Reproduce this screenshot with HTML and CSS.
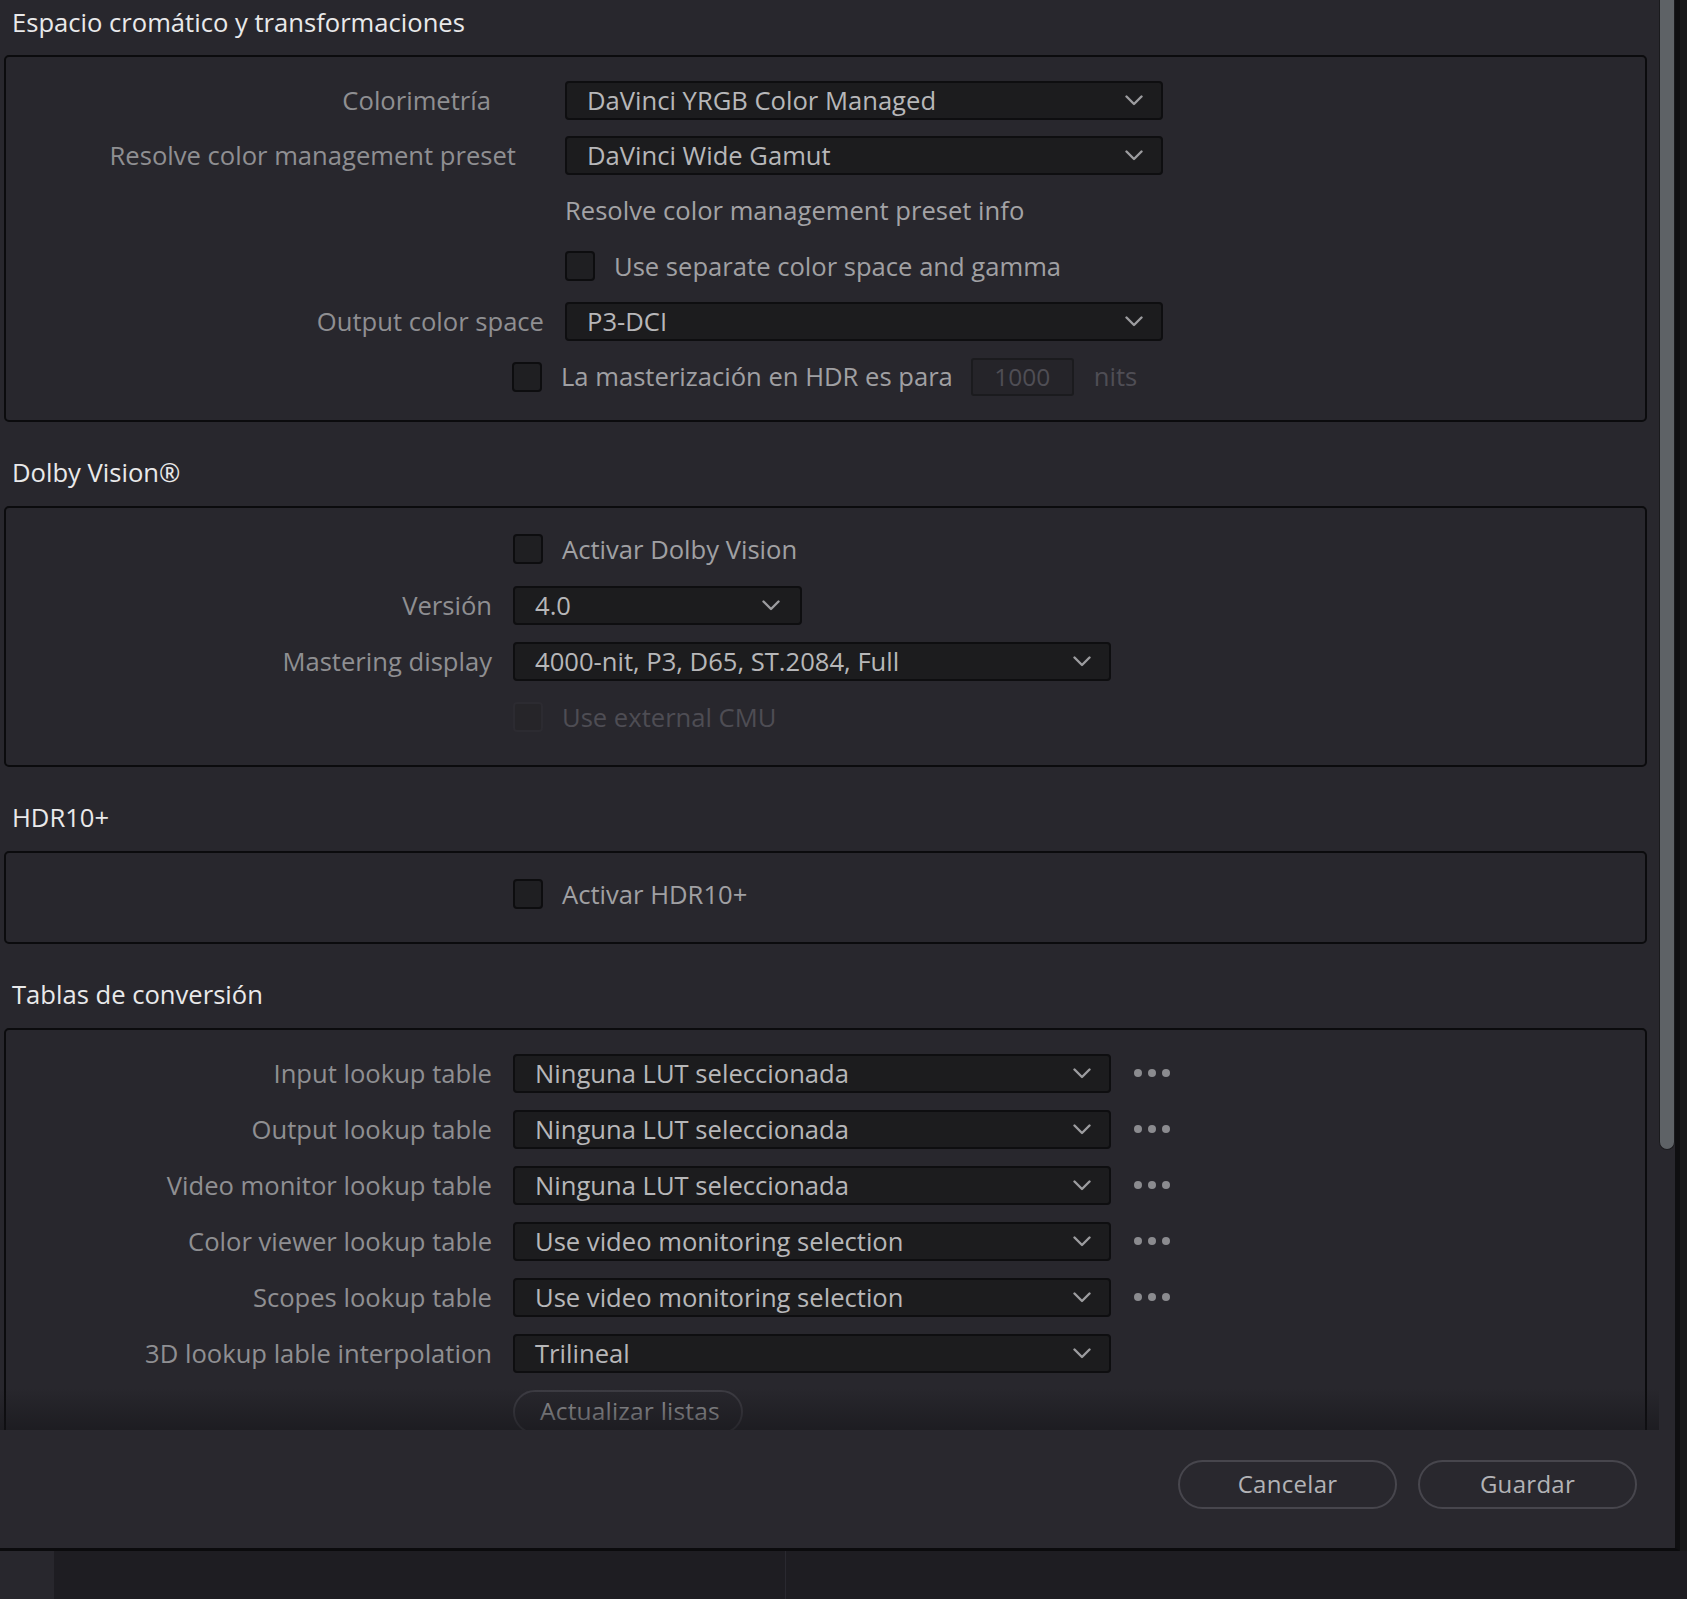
FILE: index.html
```html
<!DOCTYPE html>
<html lang="es">
<head>
<meta charset="utf-8">
<title>Espacio cromático y transformaciones</title>
<link rel="stylesheet" href="styles.css">
</head>
<body>
<div class="top">
  <div class="window">
    <div class="scroll">
      <div class="content">
        <h2 class="sec-title sec-title--first">Espacio cromático y transformaciones</h2>
        <div class="group group--wide">
          <div class="row row--tight">
            <div class="lbl lbl--p74">Colorimetría</div>
            <div class="select"><span>DaVinci YRGB Color Managed</span><svg class="chev" viewBox="0 0 18 11"><polyline points="1.5,1.5 9,9 16.5,1.5"/></svg></div>
          </div>
          <div class="row row--tight">
            <div class="lbl lbl--p49">Resolve color management preset</div>
            <div class="select"><span>DaVinci Wide Gamut</span><svg class="chev" viewBox="0 0 18 11"><polyline points="1.5,1.5 9,9 16.5,1.5"/></svg></div>
          </div>
          <div class="row row--tight">
            <div class="lbl"></div>
            <div class="info">Resolve color management preset info</div>
          </div>
          <div class="row row--tight">
            <div class="lbl"></div>
            <div class="check"><span class="box"></span><span class="check-text">Use separate color space and gamma</span></div>
          </div>
          <div class="row row--tight">
            <div class="lbl">Output color space</div>
            <div class="select"><span>P3-DCI</span><svg class="chev" viewBox="0 0 18 11"><polyline points="1.5,1.5 9,9 16.5,1.5"/></svg></div>
          </div>
          <div class="row row--tight row--hdr">
            <div class="check"><span class="box"></span><span class="check-text">La masterización en HDR es para</span></div>
            <div class="num">1000</div>
            <span class="unit">nits</span>
          </div>
        </div>

        <h2 class="sec-title">Dolby Vision®</h2>
        <div class="group">
          <div class="row">
            <div class="lbl"></div>
            <div class="check"><span class="box"></span><span class="check-text">Activar Dolby Vision</span></div>
          </div>
          <div class="row">
            <div class="lbl">Versión</div>
            <div class="select select--short"><span>4.0</span><svg class="chev" viewBox="0 0 18 11"><polyline points="1.5,1.5 9,9 16.5,1.5"/></svg></div>
          </div>
          <div class="row">
            <div class="lbl">Mastering display</div>
            <div class="select"><span>4000-nit, P3, D65, ST.2084, Full</span><svg class="chev" viewBox="0 0 18 11"><polyline points="1.5,1.5 9,9 16.5,1.5"/></svg></div>
          </div>
          <div class="row">
            <div class="lbl"></div>
            <div class="check check--disabled"><span class="box"></span><span class="check-text">Use external CMU</span></div>
          </div>
        </div>

        <h2 class="sec-title">HDR10+</h2>
        <div class="group">
          <div class="row">
            <div class="lbl"></div>
            <div class="check"><span class="box"></span><span class="check-text">Activar HDR10+</span></div>
          </div>
        </div>

        <h2 class="sec-title">Tablas de conversión</h2>
        <div class="group group--open">
          <div class="row">
            <div class="lbl">Input lookup table</div>
            <div class="select"><span>Ninguna LUT seleccionada</span><svg class="chev" viewBox="0 0 18 11"><polyline points="1.5,1.5 9,9 16.5,1.5"/></svg></div>
            <div class="more"><i></i><i></i><i></i></div>
          </div>
          <div class="row">
            <div class="lbl">Output lookup table</div>
            <div class="select"><span>Ninguna LUT seleccionada</span><svg class="chev" viewBox="0 0 18 11"><polyline points="1.5,1.5 9,9 16.5,1.5"/></svg></div>
            <div class="more"><i></i><i></i><i></i></div>
          </div>
          <div class="row">
            <div class="lbl">Video monitor lookup table</div>
            <div class="select"><span>Ninguna LUT seleccionada</span><svg class="chev" viewBox="0 0 18 11"><polyline points="1.5,1.5 9,9 16.5,1.5"/></svg></div>
            <div class="more"><i></i><i></i><i></i></div>
          </div>
          <div class="row">
            <div class="lbl">Color viewer lookup table</div>
            <div class="select"><span>Use video monitoring selection</span><svg class="chev" viewBox="0 0 18 11"><polyline points="1.5,1.5 9,9 16.5,1.5"/></svg></div>
            <div class="more"><i></i><i></i><i></i></div>
          </div>
          <div class="row">
            <div class="lbl">Scopes lookup table</div>
            <div class="select"><span>Use video monitoring selection</span><svg class="chev" viewBox="0 0 18 11"><polyline points="1.5,1.5 9,9 16.5,1.5"/></svg></div>
            <div class="more"><i></i><i></i><i></i></div>
          </div>
          <div class="row">
            <div class="lbl">3D lookup lable interpolation</div>
            <div class="select"><span>Trilineal</span><svg class="chev" viewBox="0 0 18 11"><polyline points="1.5,1.5 9,9 16.5,1.5"/></svg></div>
          </div>
          <div class="row row--btn">
            <div class="lbl"></div>
            <button class="pill pill--small">Actualizar listas</button>
          </div>
        </div>
      </div>
      <div class="scrollbar"><div class="thumb"></div></div>
      <div class="fade"></div>
    </div>
    <div class="footer">
      <button class="pill">Cancelar</button>
      <button class="pill">Guardar</button>
    </div>
  </div>
  <div class="edge"></div>
</div>
<div class="taskbar">
  <div class="tb-left"></div>
  <div class="tb-mid"></div>
  <div class="tb-right"></div>
</div>
</body>
</html>
```
FILE: styles.css
```css
* { box-sizing: border-box; }
html, body { margin: 0; padding: 0; }
body {
  background: #1b1a1e;
  font-family: "Open Sans", "Noto Sans", sans-serif;
  width: 1687px;
  height: 1599px;
  overflow: hidden;
}
.top { display: flex; height: 1551px; }
.window {
  width: 1680px;
  height: 1551px;
  display: flex;
  flex-direction: column;
  border-right: 5px solid #0f0f11;
  border-bottom: 3px solid #0b0b0d;
  background: #28272d;
}
.edge { flex: 1; background: #1a1a1b; }
.scroll {
  position: relative;
  height: 1430px;
  display: flex;
  overflow: hidden;
  background: #28272d;
}
.content {
  width: 1659px;
  padding: 6px 12px 0 4px;
}
.sec-title {
  margin: 34px 0 16px 8px;
  height: 34px;
  line-height: 34px;
  font-size: 25.6px;
  font-weight: 400;
  color: #e9e9ea;
}
.sec-title--first { margin-top: 0; margin-bottom: 15px; }
.group {
  border: 2px solid #0b0b0d;
  border-radius: 5px;
  padding: 13px 0 20px;
}
.group--wide { padding: 16px 0 16px; }
.group--open { padding: 15px 0 0; }
.row {
  display: flex;
  align-items: center;
  height: 56px;
}
.row--tight { height: 55.2px; }
.row--btn { height: auto; margin-top: 9px; align-items: flex-start; }
.lbl {
  width: 507px;
  flex: none;
  text-align: right;
  padding-right: 21px;
  font-size: 25.6px;
  color: #8f8f92;
  white-space: nowrap;
}
.group--wide .lbl { width: 559px; }
.lbl--p74 { padding-right: 74px; }
.lbl--p49 { padding-right: 49px; }
.row--hdr { padding-left: 506px; }
.select {
  width: 598px;
  height: 39px;
  flex: none;
  display: flex;
  align-items: center;
  justify-content: space-between;
  padding: 0 18px 0 20px;
  background: #1c1c1e;
  border: 2px solid #0e0e10;
  border-radius: 4px;
  font-size: 25.6px;
  color: #b7b7b9;
  white-space: nowrap;
}
.select--short { width: 289px; padding-right: 20px; }
.chev { width: 18px; height: 11px; flex: none; }
.chev polyline { fill: none; stroke: #9c9c9f; stroke-width: 2.4; stroke-linecap: round; stroke-linejoin: round; }
.info { font-size: 25.6px; color: #a3a3a6; }
.check { display: flex; align-items: center; gap: 19px; }
.box {
  width: 30px;
  height: 30px;
  flex: none;
  background: #1f1f22;
  border: 2px solid #0d0d0f;
  border-radius: 4px;
}
.check-text { font-size: 25.6px; color: #a0a0a3; white-space: nowrap; }
.check--disabled .box { background: #262529; border-color: #2c2b31; }
.check--disabled .check-text { color: #4e4d54; }
.num {
  margin-left: 18px;
  width: 103px;
  height: 38px;
  display: flex;
  align-items: center;
  justify-content: center;
  background: #252429;
  border: 2px solid #1b1b1e;
  border-radius: 3px;
  font-size: 24.5px;
  color: #4f4e55;
}
.unit { margin-left: 20px; font-size: 25.6px; color: #4f4e55; }
.more { display: flex; gap: 6px; margin-left: 23px; }
.more i { width: 8px; height: 8px; border-radius: 50%; background: #8b8b8f; display: block; }
.pill {
  font-family: inherit;
  background: #29282e;
  border: 2px solid #47464d;
  border-radius: 26px;
  color: #b3b3b6;
  font-size: 24px;
  letter-spacing: 0.3px;
  width: 219px;
  height: 49px;
  padding: 0 0 3px;
}
.pill--small {
  width: 230px;
  height: 44px;
  letter-spacing: 0.2px;
  font-size: 24.5px;
  text-align: left;
  padding: 0 0 4px 25px;
  color: #9c9c9f;
  background: transparent;
  border-color: #3e3d44;
}
.scrollbar { width: 16px; flex: none; }
.thumb {
  height: 1150px;
  background: #5e6266;
  border: 1px solid #1a1a1d;
  border-top: none;
  border-radius: 0 0 8px 8px;
}
.fade {
  position: absolute;
  left: 0;
  right: 16px;
  bottom: 0;
  height: 42px;
  background: linear-gradient(to bottom, rgba(20,20,24,0), rgba(20,20,24,0.55));
  pointer-events: none;
}
.footer {
  height: 118px;
  background: #29282e;
  display: flex;
  justify-content: flex-end;
  align-items: flex-start;
  gap: 21px;
  padding: 30px 38px 0 0;
}
.taskbar { display: flex; height: 48px; background: #1e1d22; }
.tb-left { width: 54px; background: #28272d; }
.tb-mid { width: 731px; }
.tb-right { flex: 1; border-left: 1px solid #2a2930; }
```
